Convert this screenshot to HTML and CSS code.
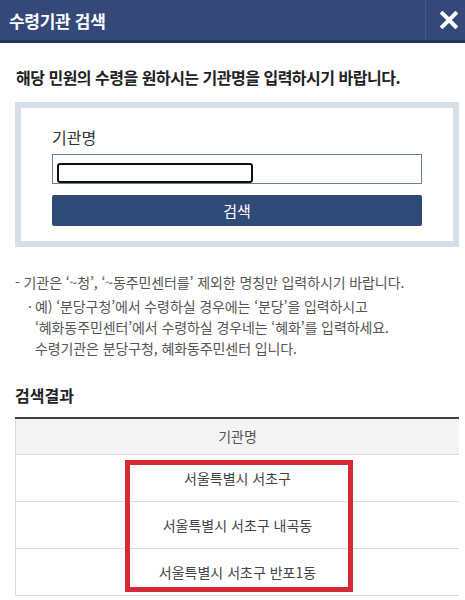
FILE: index.html
```html
<!DOCTYPE html>
<html lang="ko">
  <head>
    <meta charset="UTF-8" />
    <meta name="viewport" content="width=device-width, initial-scale=1.0" />
    <title>수령기관 검색</title>
    <link rel="stylesheet" href="styles.css">
  </head>
  <body>
    <header class="popup-head">
      <h1 class="popup-title">수령기관 검색</h1>
      <button class="popup-close" type="button" aria-label="닫기">
        <svg width="18" height="18" viewBox="0 0 18 18" aria-hidden="true">
          <path d="M2.5 2.5 L15.5 15.5 M15.5 2.5 L2.5 15.5" stroke="#fff" stroke-width="4" stroke-linecap="square" />
        </svg>
      </button>
    </header>

    <main class="popup-body">
      <p class="intro">해당 민원의 수령을 원하시는 기관명을 입력하시기 바랍니다.</p>

      <form class="search-box" onsubmit="return false">
        <label class="search-label" for="orgName">기관명</label>
        <div class="search-field">
          <input id="orgName" class="search-input" type="text" />
          <!-- masked value -->
          <span class="mask"></span>
        </div>
        <button class="search-btn" type="submit">검색</button>
      </form>

      <ul class="notes">
        <li>- 기관은 ‘~청’, ‘~동주민센터를’ 제외한 명칭만 입력하시기 바랍니다.</li>
        <li class="sub">
          <span class="dot">·</span>
          <span>예) ‘분당구청’에서 수령하실 경우에는 ‘분당’을 입력하시고<br>
          ‘혜화동주민센터’에서 수령하실 경우네는 ‘혜화’를 입력하세요.<br>
          수령기관은 분당구청, 혜화동주민센터 입니다.</span>
        </li>
      </ul>

      <h2 class="result-title">검색결과</h2>
      <div class="result-wrap">
        <table class="result">
          <thead>
            <tr><th>기관명</th></tr>
          </thead>
          <tbody>
            <tr><td>서울특별시 서초구</td></tr>
            <tr><td>서울특별시 서초구 내곡동</td></tr>
            <tr><td>서울특별시 서초구 반포1동</td></tr>
          </tbody>
        </table>
        <span class="highlight"></span>
      </div>
    </main>
  </body>
</html>
```

FILE: styles.css
```css
*,
*::before,
*::after {
  box-sizing: border-box;
}

body {
  margin: 0;
  font-family: "Noto Sans CJK KR", "Noto Sans", sans-serif;
  color: #222;
  background: #fff;
}

.popup-head {
  display: flex;
  align-items: center;
  height: 43px;
  background-color: #34497a;
  border-bottom: 3px solid #233559;
}

.popup-title {
  flex: 1;
  margin: 0;
  padding-left: 9px;
  font-size: 17px;
  font-weight: 700;
  letter-spacing: -0.3px;
  color: #fff;
}

.popup-close {
  display: flex;
  align-items: center;
  justify-content: flex-end;
  width: 40px;
  height: 40px;
  padding: 0 7px 0 0;
  margin: 0;
  background: none;
  border: 0;
  border-left: 1px solid #465b88;
  cursor: pointer;
}

.popup-body {
  padding: 0 6px 0 15px;
}

.intro {
  margin: 22px 0 13px 1px;
  font-size: 16px;
  line-height: 24px;
  font-weight: 700;
  letter-spacing: -0.5px;
  color: #222;
}

.search-box {
  display: flex;
  flex-direction: column;
  margin: 0;
  padding: 17px 31px 15px;
  border: 6px solid #d6deea;
}

.search-label {
  font-size: 16px;
  line-height: 24px;
  color: #333;
  margin-bottom: 5px;
}

.search-field {
  position: relative;
  height: 30px;
}

.search-input {
  display: block;
  width: 100%;
  height: 30px;
  margin: 0;
  padding: 0 6px;
  border: 1px solid #6f8088;
  background: #fff;
  font: inherit;
}

.mask {
  position: absolute;
  left: 5px;
  top: 9px;
  width: 196px;
  height: 20px;
  border: 2px solid #111;
  border-radius: 3px;
  background: #fff;
}

.search-btn {
  margin-top: 11px;
  height: 31px;
  border: 0;
  border-radius: 2px;
  background-color: #2f4a77;
  color: #fff;
  font-family: inherit;
  font-size: 15px;
  cursor: pointer;
}

.notes {
  list-style: none;
  margin: 25px 0 0;
  padding: 0;
  font-size: 14px;
  line-height: 21px;
  letter-spacing: -0.1px;
  color: #555;
}

.notes .sub {
  display: flex;
  margin-top: 3px;
  padding-left: 13px;
}

.notes .dot {
  width: 7px;
}

.result-title {
  margin: 24px 0 10px;
  font-size: 16px;
  line-height: 24px;
  font-weight: 700;
  color: #222;
}

.result-wrap {
  position: relative;
}

.result {
  width: 100%;
  border-collapse: collapse;
  border-top: 2px solid #3a3f47;
  font-size: 14px;
  color: #444;
}

.result th,
.result td {
  text-align: center;
  font-weight: 400;
  border-bottom: 1px solid #dcdcdc;
  border-left: 1px solid #dcdcdc;
}

.result th {
  height: 36px;
  background-color: #f4f4f4;
  color: #555;
}

.result td {
  height: 47px;
}

.highlight {
  position: absolute;
  left: 110px;
  top: 43px;
  width: 228px;
  height: 132px;
  border: 5px solid #d42a35;
  pointer-events: none;
}
```
